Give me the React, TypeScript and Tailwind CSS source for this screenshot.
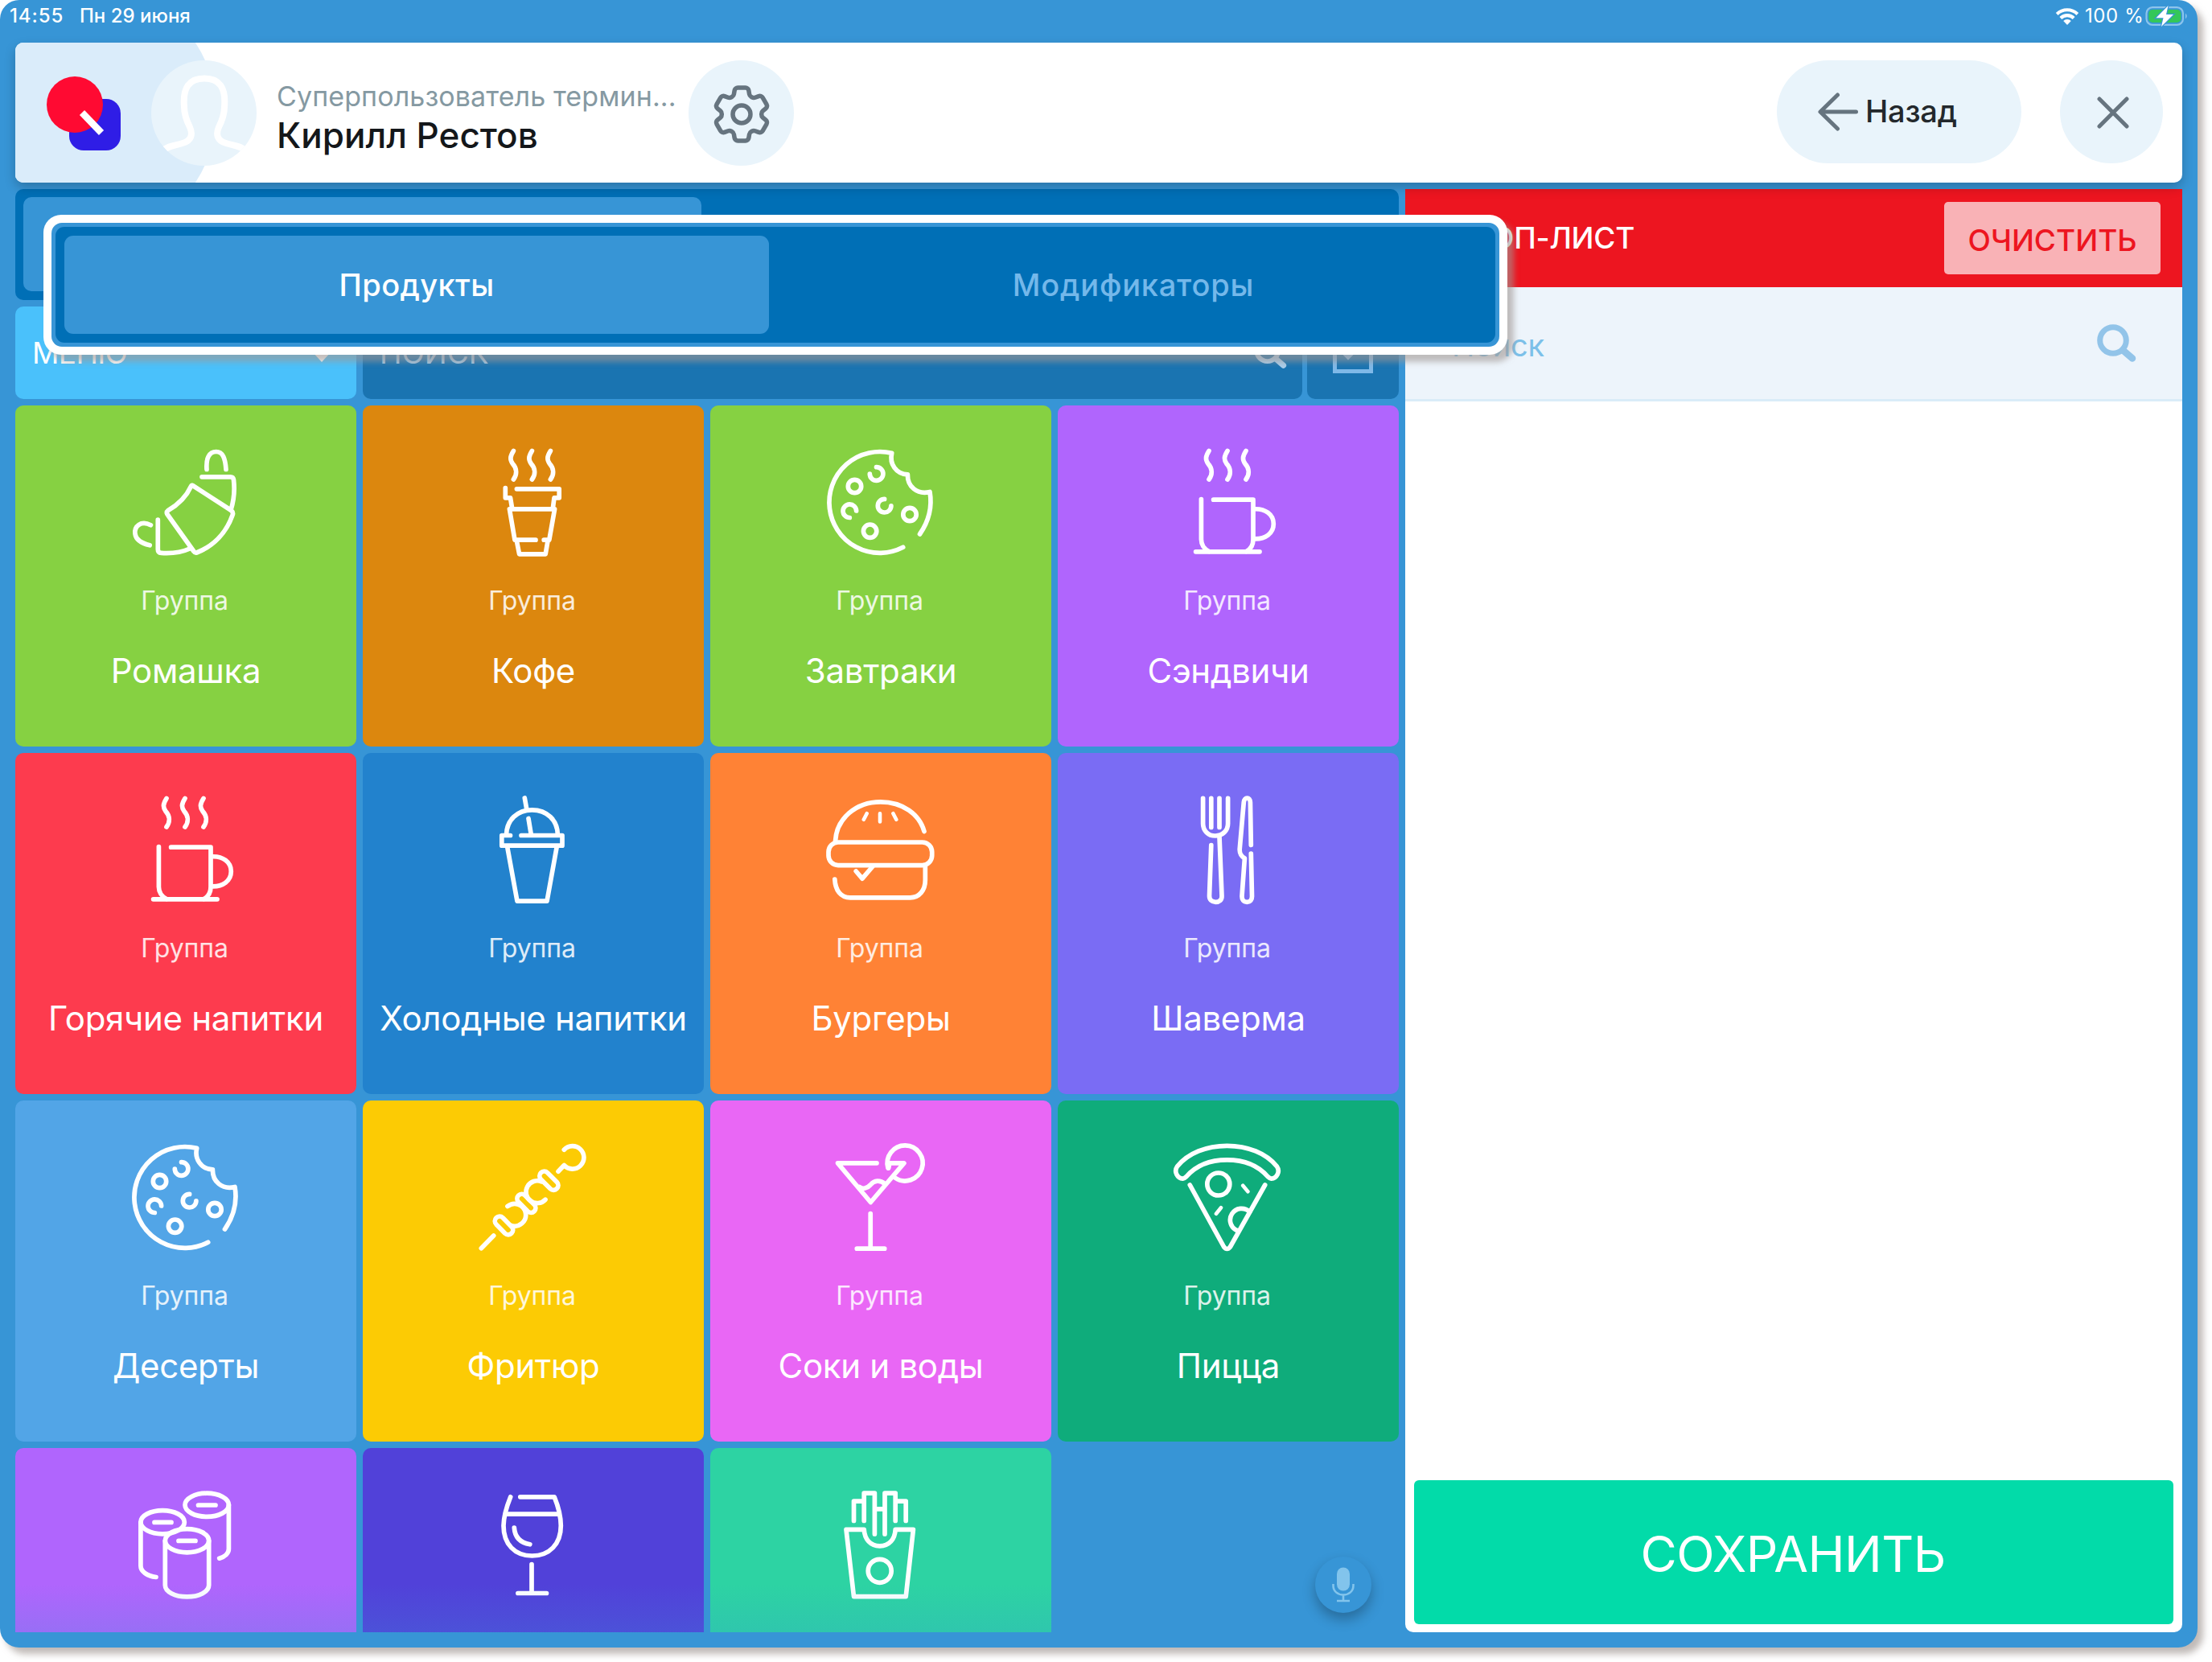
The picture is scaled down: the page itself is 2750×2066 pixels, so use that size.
import type { ReactNode } from "react";
import { HiOutlineCog6Tooth } from "react-icons/hi2";

/* ---------- line icons of the product groups (drawn in tile coordinates) ---------- */

function TileIcon({ children }: { children: ReactNode }) {
  return (
    <svg
      viewBox="140 47.5 144 144"
      className="block h-36 w-36"
      fill="none"
      stroke="white"
      strokeWidth={5.7}
      strokeLinecap="round"
      strokeLinejoin="round"
    >
      {children}
    </svg>
  );
}

const steam = (x: number) => `M${x} 56C${x - 4} 62.5 ${x - 5} 66.5 ${x - 1} 72C${x + 5} 78.5 ${x + 4} 86 ${x} 91.5`;

const Croissant = () => (
  <TileIcon>
    <path d="M238 79C237 65 241 57 249.7 57C258 57 261 65 262 79" />
    <path d="M232 88.3H267.5Q271 88.3 271.5 92C273 105 272 117 268 129.5" />
    <path d="M220.5 99L268.5 130Q271.5 132.5 270 136C262.5 157 247 174 225.5 182.5Q223.3 183 222 181L188.8 134.5Q187.5 132 190 130C203 122.5 213 112 218.5 100Q219.3 98.3 220.5 99" />
    <path d="M177.3 141.7V178.5Q177.3 182.7 181.5 182.9C195 183.7 206 182.5 217 177.5" />
    <path d="M168.4 148.2C156 142 147.8 150 149 159C150 166.5 157.5 171 167.2 173.3" />
  </TileIcon>
);

const Coffee = () => (
  <TileIcon>
    <path d={steam(187.4)} />
    <path d={steam(210.4)} />
    <path d={steam(233.4)} />
    <path d="M177.3 102V114.3H183.5L185.7 127.7" />
    <path d="M191.4 103.3H244.2V114.3H238L236.3 127.7" />
    <path d="M215 166.7H189L182.4 128.3H238.6L231.8 166.7H225.2" />
    <path d="M191.4 168L194.6 184.3H227.2L230 168" />
  </TileIcon>
);

const Cookie = () => (
  <TileIcon>
    <path d="M239.7 175.8A62.9 62.9 0 1 1 225.7 58.8C222.5 72 231 85 245.4 85.3C245 100 257 111 273 107C276 125 272 143 260.5 159.5" />
    <circle cx="179.5" cy="100" r="8.2" />
    <circle cx="248" cy="135" r="8.2" />
    <circle cx="198.6" cy="155.7" r="8.2" />
    <path d="M206.5 76.2A8.3 8.3 0 1 1 198.3 84.6" />
    <path d="M216.6 115.9A8.3 8.3 0 1 0 224.9 124.4" />
    <path d="M173.3 139A8.3 8.3 0 1 1 181.6 130.5" />
  </TileIcon>
);

const Mug = () => (
  <TileIcon>
    <path d={steam(188)} />
    <path d={steam(211)} />
    <path d={steam(234)} />
    <path d="M178.4 116V166C178.4 172 182 178 188 181" />
    <path d="M193.6 116.7H243V166C243 172 240 178 234.5 181" />
    <path d="M244 128.3C258 127.5 268.3 135 268.3 146.8C268.3 158.5 258 166 244 165.3" />
    <path d="M171.6 181.3H251" />
  </TileIcon>
);

const ColdCup = () => (
  <TileIcon>
    <path d="M201.3 55.5L203.7 69" />
    <path d="M178.5 101C179 83 192 70.3 210.4 70.3C229 70.3 242 83 242.4 101" />
    <path d="M206 81L209.3 101" />
    <path d="M183.5 102H172.8V114.7H248V102H197" />
    <path d="M179.6 115.7L192 183.7H229L241.3 115.7" />
  </TileIcon>
);

const Burger = () => (
  <TileIcon>
    <path d="M155.5 109C157 81 181 60.3 211.6 60.3C239 60.3 260 75.5 266 97" />
    <path d="M194.7 74.7L190.8 82.3M211 74.7V85M227.4 74.7L231.3 82.3" strokeWidth={4.6} />
    <rect x="147" y="110.5" width="128.7" height="28.6" rx="12" />
    <path d="M181.2 146.5L189 155.7L202 140.5" />
    <path d="M154.8 156.5C155.5 170 162 179.3 174 179.3H248.5C260 179.3 267.3 170 267.3 157.5V140" />
  </TileIcon>
);

const Cutlery = () => (
  <TileIcon>
    <path d="M180.6 55.8V87.3C180.6 96 187 102.5 195.8 102.5C205 102.5 211.6 96 211.6 87.3V55.8M190.8 55.8V92M201 55.8V92" />
    <path d="M190.8 114L188.5 177.3C188.5 182 191.5 184.8 196.2 184.8C201 184.8 204.2 182 204 177.3L201 103.5" />
    <path d="M240.3 114L239.4 60.7C239.2 54 231.8 54 231.3 60.7L226.2 119C226 124 227 127 232.4 130.5L229 177.3C228.8 182 231 184.8 235.2 184.8C239.5 184.8 241.6 182 241.5 177.3L240.3 124.5" />
  </TileIcon>
);

const capsule = (a: number, b: number, c: number, d: number) =>
  `M${a - 4.1} ${b + 4.1}A5.8 5.8 0 0 1 ${a + 4.1} ${b - 4.1}L${c + 4.1} ${d - 4.1}A5.8 5.8 0 0 1 ${c - 4.1} ${d + 4.1}Z`;

const Skewer = () => (
  <TileIcon>
    <path d="M147.3 183.3L162.7 167.5" />
    <path d="M250.3 60.7A14.2 14.2 0 1 1 250.3 80L243 87.7" />
    <path d={capsule(170, 149.3, 181, 160.6)} />
    <path d={capsule(197.6, 121.5, 209.2, 133.2)} />
    <path d={capsule(225.5, 93.3, 237.3, 105.1)} />
    <path d="M180 131A13.9 13.9 0 1 1 184.5 155" />
    <path d="M227 122.7A13.9 13.9 0 1 1 222.3 100.4" />
  </TileIcon>
);

const Cocktail = () => (
  <TileIcon>
    <path d="M207 77.3H158.5L199.4 126L240.9 77.3H222.9L221.7 83.5" />
    <path d="M221 83.5A22 22 0 1 1 229.6 95.5" />
    <path d="M185.7 107C190 110 195 109 199 104.5C204 98.5 211 98 217 103" />
    <path d="M199.2 140V183.5M182.3 183.7H216.7" />
  </TileIcon>
);

const Pizza = () => (
  <TileIcon>
    <path d="M148.5 81.5C162 65 185 55.8 210.5 55.8C236 55.8 259 65 272.5 81.5C277 88 272 96.8 265.5 96.6C263.5 96.4 262.5 95.5 261 94C249 80 231 73.3 210.5 73.3C190 73.3 172 80 160 94C158.5 95.5 157.5 96.4 155.5 96.6C149 96.8 144 88 148.5 81.5Z" />
    <path d="M164.3 104.5L206.6 181.5Q210.5 186.5 214.4 181.5L257.7 104.5" />
    <circle cx="199.8" cy="103.5" r="14" />
    <path d="M238.6 138A14.2 14.2 0 1 0 224 161.5" />
    <path d="M230.2 105.3L236.4 112.7M203 132.7L197 140.3" strokeWidth={4.6} />
  </TileIcon>
);

const Rolls = () => (
  <TileIcon>
    <ellipse cx="238.2" cy="70.3" rx="27.2" ry="14.6" />
    <ellipse cx="183.1" cy="91.7" rx="27.2" ry="14.6" />
    <ellipse cx="213.5" cy="114.7" rx="27.2" ry="14.6" />
    <path d="M227.5 70.5H249M173 91.9H194M203 114.9H224" />
    <path d="M155.9 92V146C155.9 153 164 158.5 175 160" />
    <path d="M186.3 115V170C186.3 178 198 184.4 213.5 184.4C229 184.4 240.7 178 240.7 170V115" />
    <path d="M265.4 70.3V125C265.4 130 261 134.5 253.7 136.7" />
  </TileIcon>
);

const Wine = () => (
  <TileIcon>
    <path d="M183.7 60.3C179 72 175.2 84 175 96C175 119 189 133.5 210.5 133.5C232 133.5 246.3 119 246.3 96C246.2 84 243 72 238.2 60.3H195.8" />
    <path d="M178.5 81.7H243.4" />
    <path d="M188.3 98.5C189 110 195 117 207.8 119.3" />
    <path d="M210 144V179.5M192.9 180H228.5" />
  </TileIcon>
);

const Fries = () => (
  <TileIcon>
    <path d="M169 100.9H191.2C192 113 199 121.3 210.7 121.3C222.5 121.3 229.5 113 230.2 100.9H252.4L243.2 184.2H178.5Z" />
    <circle cx="210.7" cy="152.3" r="14.5" />
    <path d="M178.5 90V65.7H191.2M191.2 90V55.7H204.4V106.5M217 106.5V55.7H230.2V90M230.2 65.7H243.2V90M204.4 75.3H217" />
  </TileIcon>
);

/* ---------- interface icons ---------- */

function SearchIcon({ className }: { className: string }) {
  return (
    <svg viewBox="0 0 50 47" className={className} fill="none" stroke="currentColor">
      <circle cx="21" cy="20" r="16.3" strokeWidth="7" />
      <path d="M34 33L45 42.5" strokeWidth="8.5" strokeLinecap="round" />
    </svg>
  );
}

function Logo() {
  return (
    <svg viewBox="0 0 94 94" className="mt-[2px] h-[94px] w-[94px]">
      <rect x="29" y="29" width="64" height="64" rx="18" fill="#2f1de6" />
      <circle cx="36" cy="36" r="35" fill="#ff0a32" />
      <path d="M45 46L69 71" stroke="white" strokeWidth="8.5" />
    </svg>
  );
}

function Avatar() {
  return (
    <div className="relative h-[131px] w-[131px] overflow-hidden rounded-full bg-[#e9f4fb]">
      <svg viewBox="0 0 131 131" className="h-full w-full" fill="none" stroke="white" strokeWidth="8">
        <path d="M14 113C20 106 30 106 39 103C50 100 52 92 48 83C44 75 41 68 41 58C39 34 47 22.5 66 22.5C85 22.5 93 34 91 58C91 68 88 75 84 83C80 92 82 100 93 103C102 106 112 106 118 113" />
      </svg>
    </div>
  );
}

function StatusBar() {
  return (
    <div className="flex h-[53px] items-start justify-between pl-[12px] pr-[9px] text-[24px] font-medium leading-[40px] text-white">
      <div className="flex">
        <span className="w-[87px] tracking-[0.9px]">14:55</span>
        <span>Пн 29 июня</span>
      </div>
      <div className="flex h-10 items-center">
        <svg viewBox="0 0 30 22" className="h-[22px] w-[30px]" fill="white">
          <path d="M15 22L10.2 16.9a6.9 6.9 0 0 1 9.6 0z" />
          <path d="M8.3 14.9L5.4 11.9a13.8 13.8 0 0 1 19.2 0l-2.9 3a9.8 9.8 0 0 0-13.4 0z" />
          <path d="M3.6 9.9L0.8 7a20.4 20.4 0 0 1 28.4 0l-2.8 2.9a16.4 16.4 0 0 0-22.8 0z" />
        </svg>
        <span className="ml-[7px] w-[75px] font-normal tracking-[0.6px]">100 %</span>
        <svg viewBox="0 0 56 28" className="h-[28px] w-[56px]">
          <rect x="1.5" y="3.2" width="45.5" height="21.6" rx="7.5" fill="none" stroke="#8cc4ec" strokeWidth="2.2" />
          <rect x="4.3" y="6" width="40" height="16" rx="4.8" fill="#34c759" />
          <path d="M50 10.5Q53.5 14 50 17.5Z" fill="#8cc4ec" />
          <path
            d="M28.5 1L13.5 16.2H22.5L20 27L35 12H26Z"
            fill="white"
            stroke="#3795d6"
            strokeWidth="2.4"
            paintOrder="stroke"
          />
        </svg>
      </div>
    </div>
  );
}

function Header() {
  return (
    <header className="relative mx-[19px] flex h-[174px] shrink-0 items-center overflow-visible rounded-[10px] bg-white shadow-[0_6px_14px_rgba(0,0,0,0.22)]">
      <div className="absolute inset-y-0 left-0 w-[250px] overflow-hidden rounded-l-[10px]">
        <div className="absolute -left-[66px] -top-[71px] h-[316px] w-[316px] rounded-full bg-[#daecfa]" />
        <div className="absolute inset-y-0 left-0 w-[150px] bg-[#daecfa]" />
      </div>
      <div className="relative flex w-full items-center">
        <div className="ml-[38px]">
          <Logo />
        </div>
        <div className="ml-[37px]">
          <Avatar />
        </div>
        <div className="ml-[25px] flex w-[512px] flex-col pt-[7px]">
          <div className="whitespace-nowrap text-[34px] leading-[48px] tracking-[0.1px] text-[#8599a2]">
            Суперпользователь термин...
          </div>
          <div className="whitespace-nowrap text-[44px] font-medium leading-[48px] text-[#14171a]">
            Кирилл Рестов
          </div>
        </div>
        <button className="flex h-[131px] w-[131px] items-center justify-center rounded-full bg-[#e9f4fb] pt-[3px] text-[#66747f]">
          <HiOutlineCog6Tooth className="h-[88px] w-[88px]" />
        </button>
        <div className="ml-auto mr-[24px] flex gap-12 pb-[3px]">
          <button className="flex h-32 w-[304px] items-center rounded-full bg-[#e9f4fb] pl-[51px]">
            <svg viewBox="0 0 50 48" className="h-[48px] w-[50px]" fill="none" stroke="#66747f" strokeWidth="5" strokeLinecap="round" strokeLinejoin="round">
              <path d="M24.5 3L3 24L24.5 45M3.5 24H47.5" />
            </svg>
            <span className="ml-[9px] text-[38px] font-medium tracking-[-0.2px] text-[#23282c]">Назад</span>
          </button>
          <button className="flex h-32 w-32 items-center justify-center rounded-full bg-[#e9f4fb] pl-[3px] pt-[2px]">
            <svg viewBox="0 0 40 40" className="h-10 w-10" fill="none" stroke="#66747f" strokeWidth="5" strokeLinecap="round">
              <path d="M3 3L37 37M37 3L3 37" />
            </svg>
          </button>
        </div>
      </div>
    </header>
  );
}

type Tile = { name: string; color: string; icon: ReactNode };

const tiles: Tile[] = [
  { name: "Ромашка", color: "bg-[#86d142]", icon: <Croissant /> },
  { name: "Кофе", color: "bg-[#dc870e]", icon: <Coffee /> },
  { name: "Завтраки", color: "bg-[#86d142]", icon: <Cookie /> },
  { name: "Сэндвичи", color: "bg-[#b065fd]", icon: <Mug /> },
  { name: "Горячие напитки", color: "bg-[#fd3b4e]", icon: <Mug /> },
  { name: "Холодные напитки", color: "bg-[#2282cd]", icon: <ColdCup /> },
  { name: "Бургеры", color: "bg-[#ff8235]", icon: <Burger /> },
  { name: "Шаверма", color: "bg-[#7a6cf4]", icon: <Cutlery /> },
  { name: "Десерты", color: "bg-[#52a5e7]", icon: <Cookie /> },
  { name: "Фритюр", color: "bg-[#fccb04]", icon: <Skewer /> },
  { name: "Соки и воды", color: "bg-[#e967f5]", icon: <Cocktail /> },
  { name: "Пицца", color: "bg-[#0fac7b]", icon: <Pizza /> },
  { name: "", color: "bg-[#b065fd]", icon: <Rolls /> },
  { name: "", color: "bg-[#5141d9]", icon: <Wine /> },
  { name: "", color: "bg-[#2dd3a3]", icon: <Fries /> },
];

function GroupTile({ tile }: { tile: Tile }) {
  return (
    <div className={`flex h-[424px] flex-col items-center rounded-[10px] pt-12 text-white ${tile.color}`}>
      {tile.icon}
      {tile.name && (
        <>
          <div className="mt-[31px] pr-[3px] text-[32px] leading-[40px] tracking-[-0.1px] text-white/85">Группа</div>
          <div className="mt-[39px] whitespace-nowrap text-[42px] leading-[56px] tracking-[-0.3px]">{tile.name}</div>
        </>
      )}
    </div>
  );
}

function Menu() {
  return (
    <section className="flex w-[1720px] flex-col gap-2">
      <div className="flex h-[138px] shrink-0 rounded-[10px] bg-[#006fb6] px-[10px] py-[10px]">
        <div className="h-[117px] w-[843px] rounded-[10px] bg-[#3795d6]" />
      </div>
      <div className="flex h-[115px] shrink-0 gap-2">
        <div className="flex w-[424px] items-center justify-between rounded-[10px] bg-[#4ac1fb] pl-[21px] pr-[30px] text-[37px] tracking-[-0.6px] text-white">
          МЕНЮ
          <svg viewBox="0 0 26 14" className="mt-[8px] h-[14px] w-[26px]" fill="white">
            <path d="M0 0H26L13 14Z" />
          </svg>
        </div>
        <div className="flex w-[1168px] items-center justify-between rounded-[10px] bg-[#1a74b1] pl-[21px] pr-[19px] text-[37px] text-[#9fc4e2]">
          ПОИСК
          <SearchIcon className="h-[39px] w-[42px] text-[#a9cdea]" />
        </div>
        <div className="-ml-[2px] flex flex-1 items-center justify-center rounded-[10px] bg-[#1a74b1]">
          <svg viewBox="0 0 50 50" className="h-[50px] w-[50px]" fill="none" stroke="#7fb9e8" strokeWidth="5">
            <rect x="2.5" y="2.5" width="45" height="45" />
            <path d="M9 20L19 30L41 8" />
          </svg>
        </div>
      </div>
      <div className="relative min-h-0 flex-1 overflow-hidden">
        <div className="grid grid-cols-4 gap-2">
          {tiles.map((t, i) => (
            <GroupTile key={i} tile={t} />
          ))}
        </div>
        <div className="absolute inset-x-0 bottom-0 h-[60px] bg-linear-to-b from-[#3795d6]/0 to-[#3795d6]/20" />
        <button className="absolute bottom-[24px] right-[34px] flex h-[70px] w-[70px] items-center justify-center rounded-full bg-[#3795d6] shadow-[0_8px_16px_rgba(0,0,0,0.28)]">
          <svg viewBox="0 0 28 44" className="h-[44px] w-[28px]" fill="none" stroke="#82c4ec" strokeWidth="2.6">
            <rect x="6" y="0.5" width="16" height="29" rx="8" fill="#82c4ec" stroke="none" />
            <path d="M1.5 21V23C1.5 30 7 34.5 14 34.5C21 34.5 26.5 30 26.5 23V21M14 34.5V41M6 42H22" />
          </svg>
        </button>
      </div>
    </section>
  );
}

function StopList() {
  return (
    <section className="flex flex-1 flex-col overflow-hidden rounded-b-[10px] bg-white">
      <div className="flex h-[122px] shrink-0 items-center justify-between bg-[#ed1520] pl-[31px] pr-[27px]">
        <span className="w-[254px] text-right text-[37px] font-medium tracking-[-0.3px] text-white">СТОП-ЛИСТ</span>
        <button className="h-[90px] w-[269px] rounded-[5px] bg-[#f9b2b6] pt-[6px] text-[37px] font-medium leading-[84px] text-[#ed1520]">
          ОЧИСТИТЬ
        </button>
      </div>
      <div className="flex h-[142px] shrink-0 items-center justify-between border-b-[3px] border-[#d9ecf8] bg-[#edf4fb] pl-[58px] pr-[57px] text-[38px] text-[#7cc0e9]">
        <span className="pt-[5px] tracking-[-0.2px]">Поиск</span>
        <SearchIcon className="h-[47px] w-[50px] text-[#92c4e9]" />
      </div>
      <div className="flex-1" />
      <button className="mx-[11px] mb-[10px] h-[179px] rounded-[6px] bg-[#02dba9] pr-[2px] pt-[4px] text-[62px] leading-[175px] tracking-[-0.5px] text-white">
        СОХРАНИТЬ
      </button>
    </section>
  );
}

function TabsCallout() {
  return (
    <div className="absolute left-[54px] top-[267px] h-[174px] w-[1820px] rounded-[22px] bg-white p-[10px] shadow-[8px_9px_7px_rgba(160,151,148,0.6)]">
      <div className="h-full rounded-[13px] bg-[#3795d6] p-[5px]">
        <div className="flex h-full rounded-[11px] bg-[#006fb6] px-[11px] pb-[11px] pt-[11px] text-[38px] font-medium leading-[122px]">
          <div className="w-[876px] rounded-[11px] bg-[#3795d6] text-center tracking-[0.4px] text-white">Продукты</div>
          <div className="flex-1 pl-[14px] text-center tracking-[0.8px] text-[#74b8ea]">Модификаторы</div>
        </div>
      </div>
    </div>
  );
}

export default function App() {
  return (
    <div className="h-[2066px] w-[2750px] overflow-hidden bg-white font-['Inter',sans-serif]">
      <div className="relative flex h-[2048px] w-[2732px] flex-col rounded-[24px] bg-[#3795d6] shadow-[7px_8px_8px_rgba(150,140,135,0.6)]">
        <StatusBar />
        <Header />
        <main className="mx-[19px] mt-2 flex h-[1794px] gap-2">
          <Menu />
          <StopList />
        </main>
        <TabsCallout />
      </div>
    </div>
  );
}
